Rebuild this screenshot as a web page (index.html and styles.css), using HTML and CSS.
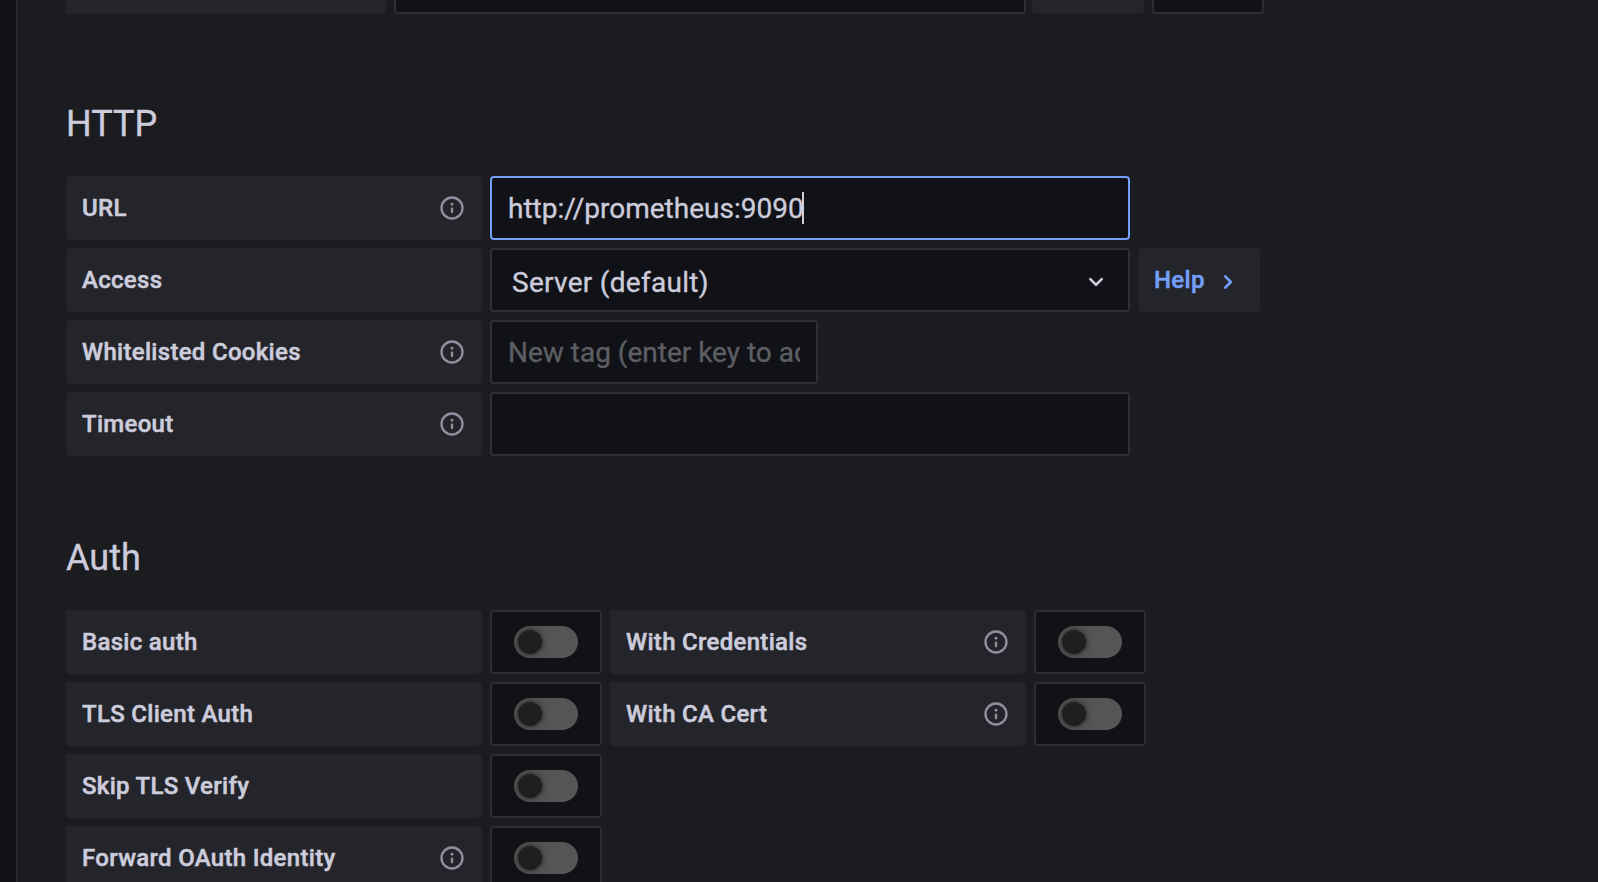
FILE: index.html
```html
<!DOCTYPE html>
<html lang="en">
<head>
<meta charset="utf-8">
<title>Data source settings</title>
<link rel="stylesheet" href="styles.css">
</head>
<body>
<svg class="sprite" aria-hidden="true">
  <symbol id="info" viewBox="0 0 24 24"><path d="M12,2A10,10,0,1,0,22,12,10,10,0,0,0,12,2Zm0,18a8,8,0,1,1,8-8A8,8,0,0,1,12,20Zm0-8.500a1,1,0,0,0-1,1v3a1,1,0,0,0,2,0v-3A1,1,0,0,0,12,11.500Zm0-4a1.250,1.250,0,1,0,1.250,1.250A1.250,1.250,0,0,0,12,7.500Z"/></symbol>
  <symbol id="down" viewBox="0 0 24 24"><path d="M17,9.170a1,1,0,0,0-1.410,0L12,12.710,8.460,9.170a1,1,0,0,0-1.410,0,1,1,0,0,0,0,1.420l4.240,4.240a1,1,0,0,0,1.420,0L17,10.590A1,1,0,0,0,17,9.170Z"/></symbol>
  <symbol id="right" viewBox="0 0 24 24"><path d="M14.830,11.290,10.590,7.050a1,1,0,0,0-1.420,0,1,1,0,0,0,0,1.410L12.710,12,9.170,15.540a1,1,0,0,0,0,1.410,1,1,0,0,0,.710.290,1,1,0,0,0,.710-.290l4.240-4.240A1,1,0,0,0,14.830,11.290Z"/></symbol>
</svg>
<div class="page">
  <main class="panel">
    <div class="row row-name">
      <div class="label label-name"></div>
      <div class="input input-name"></div>
      <div class="label label-default"></div>
      <div class="switch-box"></div>
    </div>

    <section class="group">
      <h3 class="title">HTTP</h3>
      <div class="row">
        <div class="label"><span>URL</span><svg class="info"><use href="#info"/></svg></div>
        <div class="input focused"><span>http://prometheus:9090</span><i class="caret"></i></div>
      </div>
      <div class="row">
        <div class="label"><span>Access</span></div>
        <div class="input select"><span>Server (default)</span><svg class="chevron"><use href="#down"/></svg></div>
        <div class="label help"><span>Help</span><svg class="chevron"><use href="#right"/></svg></div>
      </div>
      <div class="row">
        <div class="label"><span>Whitelisted Cookies</span><svg class="info"><use href="#info"/></svg></div>
        <div class="input tags"><span class="placeholder">New tag (enter key to add)</span></div>
      </div>
      <div class="row">
        <div class="label"><span>Timeout</span><svg class="info"><use href="#info"/></svg></div>
        <div class="input"></div>
      </div>
    </section>

    <section class="group">
      <h3 class="title">Auth</h3>
      <div class="row">
        <div class="label"><span>Basic auth</span></div>
        <div class="switch-box"><i class="switch"></i></div>
        <div class="label"><span>With Credentials</span><svg class="info"><use href="#info"/></svg></div>
        <div class="switch-box"><i class="switch"></i></div>
      </div>
      <div class="row">
        <div class="label"><span>TLS Client Auth</span></div>
        <div class="switch-box"><i class="switch"></i></div>
        <div class="label"><span>With CA Cert</span><svg class="info"><use href="#info"/></svg></div>
        <div class="switch-box"><i class="switch"></i></div>
      </div>
      <div class="row">
        <div class="label"><span>Skip TLS Verify</span></div>
        <div class="switch-box"><i class="switch"></i></div>
      </div>
      <div class="row">
        <div class="label"><span>Forward OAuth Identity</span><svg class="info"><use href="#info"/></svg></div>
        <div class="switch-box"><i class="switch"></i></div>
      </div>
    </section>
  </main>
</div>
</body>
</html>
```
FILE: styles.css
```css
* { box-sizing: border-box; }

html, body { height: 100%; }

body {
  margin: 0;
  overflow: hidden;
  background: #111217;
  color: #ccccdc;
  font-family: Roboto, sans-serif;
  font-size: 28px;
  -webkit-text-stroke: 0.35px currentColor;
}

.sprite { display: none; }

.page {
  height: 100%;
  padding-left: 16px;
  overflow: hidden;
}

.panel {
  height: 100%;
  padding-left: 48px;
  border-left: 2px solid #28292d;
  background: #1b1c1f;
  overflow: hidden;
}

.row {
  display: flex;
  gap: 8px;
  height: 64px;
  margin-bottom: 8px;
}

/* The first row is scrolled mostly out of view. */
.row-name {
  margin-top: -50px;
  margin-bottom: 88px;
}

.group { margin-bottom: 80px; }

.group .row:last-child { margin-bottom: 0; }

.title {
  height: 44px;
  margin: 0 0 30px;
  font-size: 36px;
  font-weight: 400;
  line-height: 44px;
}

.label {
  display: flex;
  align-items: center;
  justify-content: space-between;
  flex: none;
  width: 416px;
  padding: 0 16px;
  border-radius: 4px;
  background: #24252a;
  font-size: 24px;
  font-weight: 500;
  letter-spacing: 0.3px;
  white-space: nowrap;
  -webkit-text-stroke-width: 0.5px;
}

.label-name { width: 320px; }

.label-default { width: 112px; margin-left: -2px; }

.info {
  width: 28px;
  height: 28px;
  fill: #9090a0;
}

.chevron {
  width: 32px;
  height: 32px;
  fill: currentColor;
}

.input {
  display: flex;
  align-items: center;
  flex: none;
  width: 640px;
  padding: 0 16px;
  border: 2px solid #2e2f34;
  border-radius: 4px;
  background: #111217;
  white-space: nowrap;
}

.input-name { width: 632px; }

.focused { border-color: #739ff9; }

.caret {
  width: 2px;
  height: 32px;
  margin-left: -2px;
  background: #ccccdc;
}

.select {
  justify-content: space-between;
  padding: 4px 16px 0 20px;
  letter-spacing: 0.28px;
}

.tags { width: 328px; }

.placeholder {
  overflow: hidden;
  color: #5d5e63;
}

.help {
  width: 122px;
  color: #739ff9;
}

.help .chevron { margin-top: 4px; }

.switch-box {
  display: flex;
  align-items: center;
  justify-content: center;
  flex: none;
  width: 112px;
  border: 2px solid #2c2d34;
  border-radius: 4px;
  background: #111217;
}

.switch {
  width: 64px;
  height: 32px;
  padding: 4px;
  border-radius: 16px;
  background: #555;
  overflow: hidden;
}

.switch::before {
  content: "";
  display: block;
  width: 24px;
  height: 24px;
  border-radius: 50%;
  background: #1f1f1f;
  box-shadow: 0 0 6px #1f1f1f;
}
```
